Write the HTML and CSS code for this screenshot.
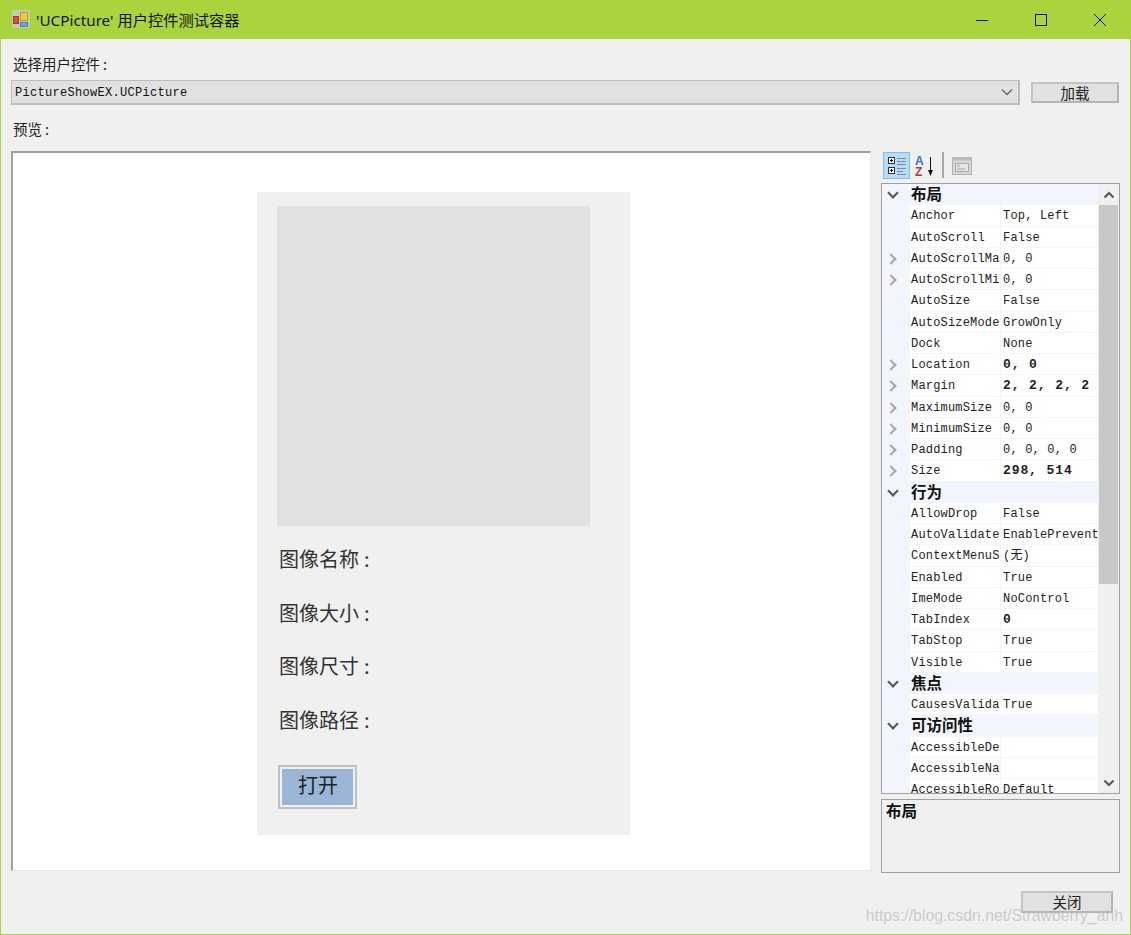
FILE: index.html
```html
<!DOCTYPE html>
<html lang="zh-CN">
<head>
    <meta charset="UTF-8">
    <title>'UCPicture' 用户控件测试容器</title>
    <link rel="stylesheet" href="styles.css">
</head>
<body>
<div class="window">
    <!-- Title bar -->
    <div class="titlebar">
        <svg class="appicon" width="18" height="18" viewBox="0 0 18 18">
            <rect x="0" y="0" width="18" height="18" fill="#c4ccae"/>
            <rect x="8.500" y="2.500" width="7" height="8" fill="#f5c93a" stroke="#b89a30"/>
            <rect x="1.500" y="6.500" width="5" height="7" fill="#e8483a" stroke="#983838"/>
            <rect x="8.500" y="12.500" width="7" height="4" fill="#6aa4e6" stroke="#4c7cb0"/>
        </svg>
        <span class="title">'UCPicture' 用户控件测试容器</span>
        <div class="winbtns">
            <svg width="14" height="14" viewBox="0 0 14 14"><path d="M1 7.500H13" stroke="#111" fill="none"/></svg>
            <svg width="14" height="14" viewBox="0 0 14 14"><rect x="1.500" y="1.500" width="11" height="11" stroke="#111" fill="none"/></svg>
            <svg width="14" height="14" viewBox="0 0 14 14"><path d="M1 1L13 13M13 1L1 13" stroke="#111" fill="none"/></svg>
        </div>
    </div>

    <div class="content">
        <div class="label first">选择用户控件<span class="colon">:</span></div>
        <div class="comborow">
            <div class="combo">
                <span>PictureShowEX.UCPicture</span>
                <svg width="12" height="8" viewBox="0 0 12 8"><path d="M1 1.500L6 6.500L11 1.500" stroke="#666" stroke-width="1.300" fill="none"/></svg>
            </div>
            <button class="btn load">加载</button>
        </div>
        <div class="label second">预览<span class="colon">:</span></div>

        <div class="main">
            <!-- Preview area -->
            <div class="preview">
                <div class="panel">
                    <div class="picture"></div>
                    <div class="info first-info">图像名称<span class="colon">:</span></div>
                    <div class="info">图像大小<span class="colon">:</span></div>
                    <div class="info">图像尺寸<span class="colon">:</span></div>
                    <div class="info">图像路径<span class="colon">:</span></div>
                    <button class="open"><span>打开</span></button>
                </div>
            </div>

            <!-- Property grid -->
            <div class="side">
                <div class="toolbar">
                    <div class="tool active">
                        <svg width="24" height="24" viewBox="0 0 24 24">
                            <rect x="3.500" y="3.500" width="6" height="6" fill="#fff" stroke="#333"/>
                            <path d="M5 6.500H8M6.500 5V8" stroke="#111"/>
                            <rect x="3.500" y="13.500" width="6" height="6" fill="#fff" stroke="#333"/>
                            <path d="M5 16.500H8M6.500 15V18" stroke="#111"/>
                            <path d="M12 4.500H21M12 7.500H21M12 10.500H21M12 14.500H21M12 17.500H18M12 20.500H21" stroke="#7d8a96"/>
                        </svg>
                    </div>
                    <div class="tool az">
                        <svg width="24" height="24" viewBox="0 0 24 24">
                            <text x="2" y="11" class="az-a">A</text>
                            <text x="2" y="22" class="az-z">Z</text>
                            <path d="M17.500 3V20" stroke="#111"/>
                            <path d="M15 16L17.500 22L20 16Z" fill="#111"/>
                        </svg>
                    </div>
                    <div class="toolsep"></div>
                    <div class="tool pages">
                        <svg width="22" height="22" viewBox="0 0 22 22">
                            <rect x="1.500" y="2.500" width="19" height="17" fill="#d8d8d8" stroke="#b0b0b0"/>
                            <rect x="1.500" y="2.500" width="19" height="3" fill="#bdbdbd"/>
                            <rect x="4.500" y="8.500" width="13" height="8" fill="#e6e6e6" stroke="#a8a8a8"/>
                            <path d="M6 11H9M6 14H14" stroke="#a0a0a0"/>
                        </svg>
                    </div>
                </div>

                <div class="grid">
                    <div class="rows">
                        <div class="cat"><i class="open-arrow"></i>布局</div>
                        <div class="row"><i></i><b>Anchor</b><em>Top, Left</em></div>
                        <div class="row"><i></i><b>AutoScroll</b><em>False</em></div>
                        <div class="row"><i class="closed"></i><b>AutoScrollMargin</b><em>0, 0</em></div>
                        <div class="row"><i class="closed"></i><b>AutoScrollMinSize</b><em>0, 0</em></div>
                        <div class="row"><i></i><b>AutoSize</b><em>False</em></div>
                        <div class="row"><i></i><b>AutoSizeMode</b><em>GrowOnly</em></div>
                        <div class="row"><i></i><b>Dock</b><em>None</em></div>
                        <div class="row"><i class="closed"></i><b>Location</b><em class="set">0, 0</em></div>
                        <div class="row"><i class="closed"></i><b>Margin</b><em class="set">2, 2, 2, 2</em></div>
                        <div class="row"><i class="closed"></i><b>MaximumSize</b><em>0, 0</em></div>
                        <div class="row"><i class="closed"></i><b>MinimumSize</b><em>0, 0</em></div>
                        <div class="row"><i class="closed"></i><b>Padding</b><em>0, 0, 0, 0</em></div>
                        <div class="row"><i class="closed"></i><b>Size</b><em class="set">298, 514</em></div>
                        <div class="cat"><i class="open-arrow"></i>行为</div>
                        <div class="row"><i></i><b>AllowDrop</b><em>False</em></div>
                        <div class="row"><i></i><b>AutoValidate</b><em>EnablePreventFocusChange</em></div>
                        <div class="row"><i></i><b>ContextMenuStrip</b><em>(无)</em></div>
                        <div class="row"><i></i><b>Enabled</b><em>True</em></div>
                        <div class="row"><i></i><b>ImeMode</b><em>NoControl</em></div>
                        <div class="row"><i></i><b>TabIndex</b><em class="set">0</em></div>
                        <div class="row"><i></i><b>TabStop</b><em>True</em></div>
                        <div class="row"><i></i><b>Visible</b><em>True</em></div>
                        <div class="cat"><i class="open-arrow"></i>焦点</div>
                        <div class="row"><i></i><b>CausesValidation</b><em>True</em></div>
                        <div class="cat"><i class="open-arrow"></i>可访问性</div>
                        <div class="row"><i></i><b>AccessibleDescription</b><em></em></div>
                        <div class="row"><i></i><b>AccessibleName</b><em></em></div>
                        <div class="row"><i></i><b>AccessibleRole</b><em>Default</em></div>
                    </div>
                    <div class="scrollbar">
                        <svg class="arrow-up" width="12" height="8" viewBox="0 0 12 8"><path d="M1.500 6.500L6 2L10.500 6.500" stroke="#555" stroke-width="2" fill="none"/></svg>
                        <div class="thumb"></div>
                        <svg class="arrow-down" width="12" height="8" viewBox="0 0 12 8"><path d="M1.500 1.500L6 6L10.500 1.500" stroke="#555" stroke-width="2" fill="none"/></svg>
                    </div>
                </div>

                <div class="help">布局</div>
            </div>
        </div>

        <div class="footer">
            <button class="btn close">关闭</button>
        </div>
    </div>

    <div class="watermark">https://blog.csdn.net/Strawberry_ahh</div>
</div>
</body>
</html>
```

FILE: styles.css
```css
html, body {
    margin: 0;
    padding: 0;
}
body {
    font-family: "Noto Sans CJK SC", sans-serif;
    color: #222;
}
.window {
    position: relative;
    width: 1131px;
    height: 935px;
    display: flex;
    flex-direction: column;
    overflow: hidden;
    background: #f0f0f0;
}

/* Title bar */
.titlebar {
    height: 39px;
    flex: none;
    display: flex;
    align-items: center;
    padding-left: 12px;
    background: #a9d43d;
}
.appicon {
    flex: none;
    margin-top: -1px;
}
.title {
    margin-left: 6px;
    margin-top: -1px;
    font-family: "Noto Sans", "Noto Sans CJK SC", sans-serif;
    font-size: 15.250px;
    color: #111;
}
.winbtns {
    margin-left: auto;
    display: flex;
    gap: 45px;
    padding-right: 24px;
}

/* Form content */
.content {
    flex: 1;
    display: flex;
    flex-direction: column;
    border: 1px solid #a9d43d;
    border-top: none;
    padding: 0 10px;
}
.label {
    font-size: 14.500px;
    line-height: 16px;
    padding-left: 2px;
}
.label.first { margin-top: 17px; }
.label.second { margin-top: 16px; }
.label .colon { margin-left: 3px; }
.comborow {
    display: flex;
    align-items: center;
    margin-top: 8px;
}
.combo {
    width: 1009px;
    height: 25px;
    box-sizing: border-box;
    display: flex;
    align-items: center;
    justify-content: space-between;
    padding: 2px 3px 0 3px;
    background: #e1e1e1;
    border: 2px solid #bdbdbd;
    border-width: 1px 2px 2px 1px;
    font-family: "Liberation Mono", monospace;
    font-size: 12px;
    letter-spacing: .3px;
    color: #111;
}
.combo svg { margin: -2px 2px 0 0; }
.btn {
    box-sizing: border-box;
    background: #e1e1e1;
    border: 2px solid #adadad;
    border-color: #c4c4c4 #b4b4b4 #b4b4b4 #c4c4c4;
    padding: 0;
    font-family: "Noto Sans CJK SC", sans-serif;
    font-size: 14.500px;
    line-height: 18px;
    color: #222;
}
.btn.load {
    width: 88px;
    height: 21px;
    margin-left: 11px;
}

.main {
    display: flex;
    height: 722px;
    margin-top: 14px;
}

/* Preview */
.preview {
    width: 860px;
    height: 720px;
    flex: none;
    box-sizing: border-box;
    background: #fff;
    border-style: solid;
    border-width: 2px 1px 1px 2px;
    border-color: #a0a0a0 #ececec #e4e4e4 #a0a0a0;
    padding: 39px 0 0 244px;
}
.panel {
    width: 373px;
    height: 643px;
    box-sizing: border-box;
    background: #f0f0f0;
    padding: 14px 0 0 20px;
}
.picture {
    width: 313px;
    height: 320px;
    background: #e1e1e1;
}
.info {
    margin: 0 0 0 2px;
    height: 53.500px;
    font-size: 20px;
    line-height: 30px;
    color: #333;
}
.info .colon { margin-left: 5px; }
.info.first-info { margin-top: 18px; }
.open {
    display: block;
    width: 79px;
    height: 44px;
    box-sizing: border-box;
    margin: 7px 0 0 1px;
    padding: 2px;
    background: #f0f0f0;
    border: 2px solid #c0c0c0;
}
.open span {
    display: block;
    height: 100%;
    background: #9ab5d5;
    font-size: 20px;
    line-height: 35px;
    color: #222;
}

/* Property grid */
.side {
    flex: 1;
    margin-left: 10px;
    display: flex;
    flex-direction: column;
}
.toolbar {
    height: 32px;
    flex: none;
    display: flex;
    align-items: flex-start;
    padding: 1px 0 0 2px;
    box-sizing: border-box;
}
.tool {
    width: 27px;
    height: 27px;
    display: flex;
    align-items: center;
    justify-content: center;
    box-sizing: border-box;
}
.tool.active {
    background: #b7dcf7;
    border: 1px solid #80bdee;
}
.tool.az { width: 28px; margin-left: 1px; }
.tool.pages { width: 22px; margin-left: 7px; }
.toolsep {
    width: 2px;
    height: 26px;
    margin-left: 3px;
    background: #a8a8a8;
}
.az-a, .az-z {
    font-family: "Liberation Sans", sans-serif;
    font-size: 12px;
    font-weight: 700;
}
.az-a { fill: #3a6fc8; }
.az-z { fill: #a83a48; }
.grid {
    position: relative;
    height: 611px;
    flex: none;
    box-sizing: border-box;
    border: 1px solid #a0a0a0;
    background: #f0f0f0;
    overflow: hidden;
}
.rows {
    width: 216px;
    height: 100%;
    overflow: hidden;
    background: #f2f5fb;
}
.cat {
    height: 21.250px;
    display: flex;
    align-items: center;
    box-sizing: border-box;
    padding-bottom: 3px;
    font-size: 15.500px;
    font-weight: 700;
    color: #111;
    background: #f2f5fb;
}
.row {
    height: 21.250px;
    display: flex;
    box-sizing: border-box;
    border-bottom: 1px solid #f2f5fb;
    font-family: "Liberation Mono", "Noto Sans CJK SC", monospace;
    font-size: 12px;
    letter-spacing: .18px;
    line-height: 22px;
    color: #222;
}
.row i, .cat i {
    flex: none;
    width: 28px;
    height: 100%;
    position: relative;
}
.cat i { width: 29px; }
.row b, .row em {
    display: block;
    font-weight: 400;
    font-style: normal;
    background: #fff;
    white-space: nowrap;
    overflow: hidden;
}
.row b {
    width: 90px;
    flex: none;
    padding-left: 1px;
    box-sizing: border-box;
    margin-right: 1px;
}
.row em {
    flex: 1;
    padding-left: 2px;
}
.row em.set {
    font-weight: 700;
    font-size: 13px;
    letter-spacing: .9px;
}

/* chevrons in the gutter */
.row i.closed::after {
    content: "";
    position: absolute;
    left: 5px;
    top: 7px;
    width: 6px;
    height: 6px;
    border-top: 2px solid #a8a8a8;
    border-right: 2px solid #a8a8a8;
    transform: rotate(45deg);
}
.cat i.open-arrow::after {
    content: "";
    position: absolute;
    left: 7px;
    top: 5px;
    width: 6px;
    height: 6px;
    border-bottom: 2px solid #555;
    border-right: 2px solid #555;
    transform: rotate(45deg);
}

.scrollbar {
    position: absolute;
    top: 0;
    right: 0;
    bottom: 0;
    width: 21px;
    background: #f0f0f0;
}
.thumb {
    position: absolute;
    top: 21px;
    left: 1px;
    width: 19px;
    height: 379px;
    background: #c8c8c8;
}
.arrow-up, .arrow-down {
    position: absolute;
    left: 5px;
}
.arrow-up { top: 7px; }
.arrow-down { bottom: 6px; }
.help {
    height: 74px;
    flex: none;
    box-sizing: border-box;
    margin-top: 5px;
    padding: 0 0 0 4px;
    border: 1px solid #a0a0a0;
    font-size: 15.500px;
    font-weight: 700;
    line-height: 20px;
    color: #111;
}

/* Footer */
.footer {
    display: flex;
    justify-content: flex-end;
    margin-top: 18px;
    padding-right: 7px;
}
.btn.close {
    width: 92px;
    height: 22px;
}

.watermark {
    position: absolute;
    right: 8px;
    top: 906px;
    font-family: "Liberation Sans", sans-serif;
    font-size: 15.800px;
    line-height: 20px;
    color: rgba(190, 190, 190, .75);
    white-space: nowrap;
}
```
